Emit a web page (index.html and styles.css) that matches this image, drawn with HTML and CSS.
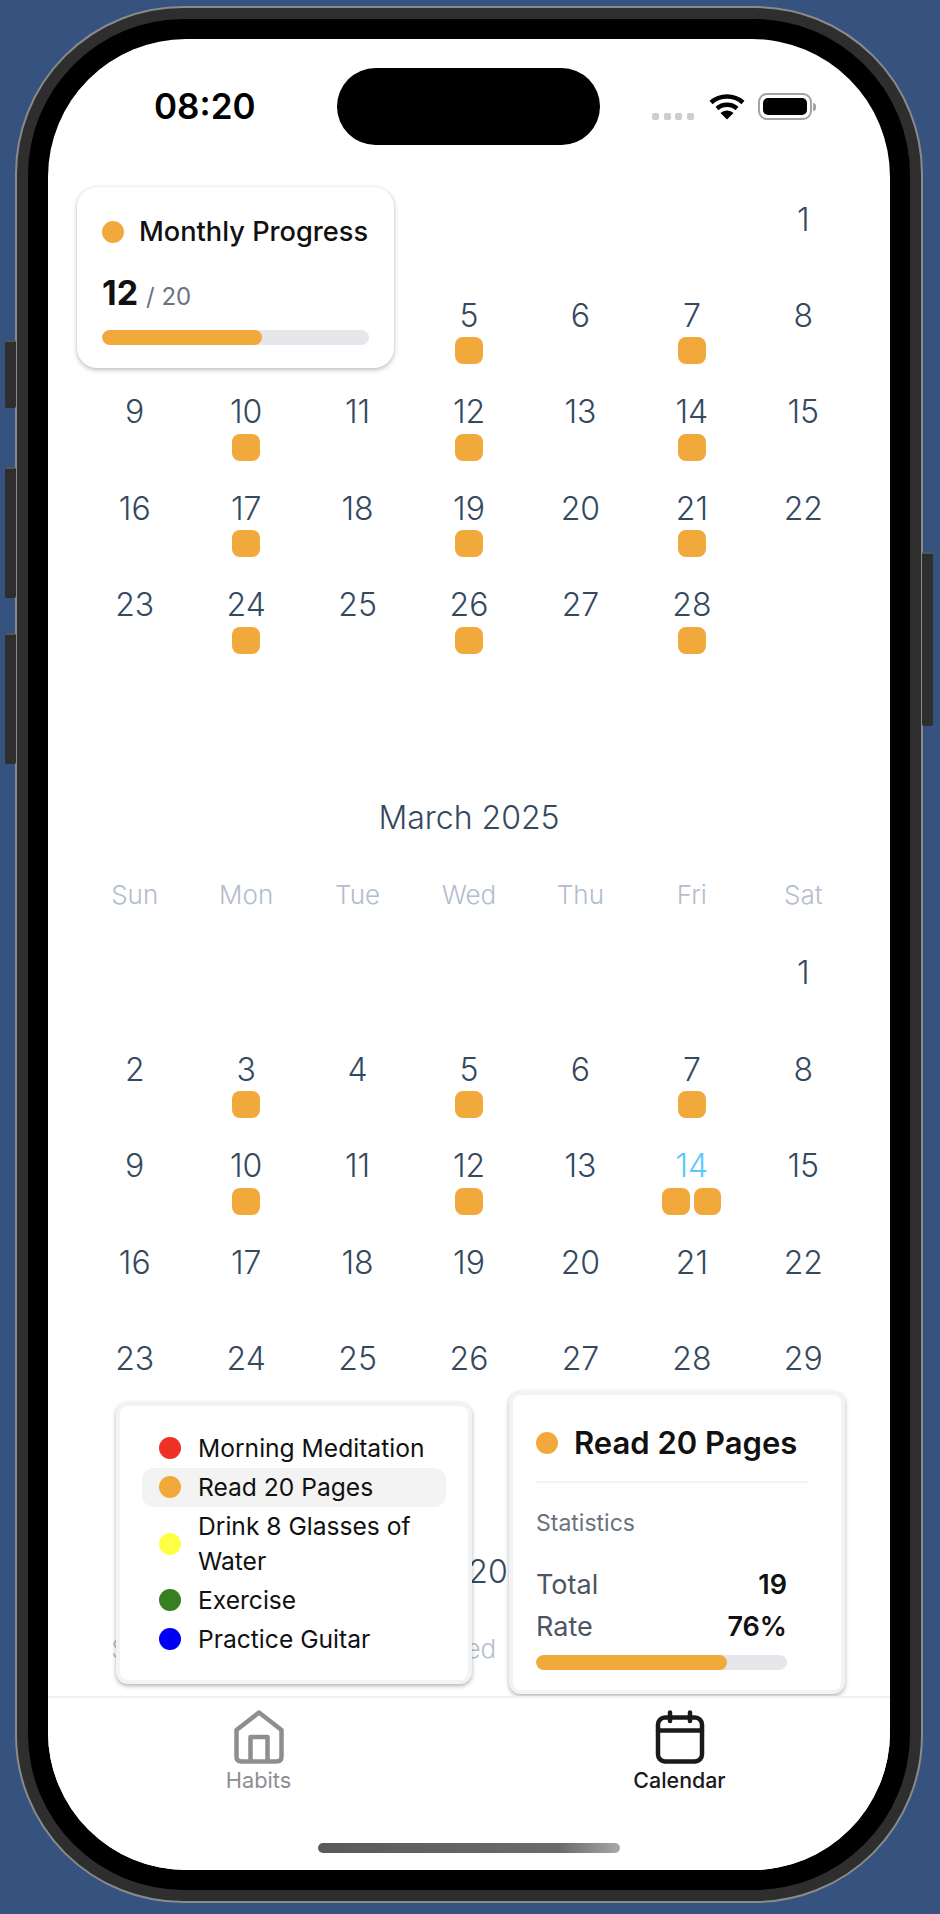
FILE: index.html
```html
<!DOCTYPE html>
<html lang="en">
<head>
<meta charset="UTF-8">
<meta name="viewport" content="width=device-width, initial-scale=1.0">
<title>Calendar</title>
<link rel="stylesheet" href="styles.css">
</head>
<body>
<div class="phone">
    <span class="side-btn side-mute"></span>
    <span class="side-btn side-up"></span>
    <span class="side-btn side-down"></span>
    <span class="side-btn side-power"></span>
    <div class="bezel">
        <div class="screen">
            <div class="status">
                <span class="time">08:20</span>
                <span class="island"></span>
                <div class="status-icons">
                    <div class="signal"><i></i><i></i><i></i><i></i></div>
                    <svg class="wifi" width="36" height="27" viewBox="0 0 36 27">
                        <path d="M2 9.5C11 1.5 25 1.5 34 9.5" fill="none" stroke="#000" stroke-width="4.5"/>
                        <path d="M8 15.5C13.5 10.5 22.5 10.5 28 15.5" fill="none" stroke="#000" stroke-width="4.5"/>
                        <path d="M18 26.5L11.5 20C15 16.6 21 16.6 24.5 20Z" fill="#000"/>
                    </svg>
                    <div class="battery"><span class="battery-level"></span></div>
                    <span class="battery-nub"></span>
                </div>
            </div>

            <div class="scroll">
                <div class="grid">
                    <div class="day empty"></div><div class="day empty"></div><div class="day empty"></div><div class="day empty"></div><div class="day empty"></div><div class="day empty"></div>
                    <div class="day"><span class="num">1</span></div>
                    <div class="day"><span class="num">2</span></div>
                    <div class="day"><span class="num">3</span><div class="marks"><i></i></div></div>
                    <div class="day"><span class="num">4</span></div>
                    <div class="day"><span class="num">5</span><div class="marks"><i></i></div></div>
                    <div class="day"><span class="num">6</span></div>
                    <div class="day"><span class="num">7</span><div class="marks"><i></i></div></div>
                    <div class="day"><span class="num">8</span></div>
                    <div class="day"><span class="num">9</span></div>
                    <div class="day"><span class="num">10</span><div class="marks"><i></i></div></div>
                    <div class="day"><span class="num">11</span></div>
                    <div class="day"><span class="num">12</span><div class="marks"><i></i></div></div>
                    <div class="day"><span class="num">13</span></div>
                    <div class="day"><span class="num">14</span><div class="marks"><i></i></div></div>
                    <div class="day"><span class="num">15</span></div>
                    <div class="day"><span class="num">16</span></div>
                    <div class="day"><span class="num">17</span><div class="marks"><i></i></div></div>
                    <div class="day"><span class="num">18</span></div>
                    <div class="day"><span class="num">19</span><div class="marks"><i></i></div></div>
                    <div class="day"><span class="num">20</span></div>
                    <div class="day"><span class="num">21</span><div class="marks"><i></i></div></div>
                    <div class="day"><span class="num">22</span></div>
                    <div class="day"><span class="num">23</span></div>
                    <div class="day"><span class="num">24</span><div class="marks"><i></i></div></div>
                    <div class="day"><span class="num">25</span></div>
                    <div class="day"><span class="num">26</span><div class="marks"><i></i></div></div>
                    <div class="day"><span class="num">27</span></div>
                    <div class="day"><span class="num">28</span><div class="marks"><i></i></div></div>
                </div>

                <div class="month">
                    <h2 class="month-title">March 2025</h2>
                    <div class="weekdays"><span>Sun</span><span>Mon</span><span>Tue</span><span>Wed</span><span>Thu</span><span>Fri</span><span>Sat</span></div>
                    <div class="grid">
                        <div class="day empty"></div><div class="day empty"></div><div class="day empty"></div><div class="day empty"></div><div class="day empty"></div><div class="day empty"></div>
                        <div class="day"><span class="num">1</span></div>
                        <div class="day"><span class="num">2</span></div>
                        <div class="day"><span class="num">3</span><div class="marks"><i></i></div></div>
                        <div class="day"><span class="num">4</span></div>
                        <div class="day"><span class="num">5</span><div class="marks"><i></i></div></div>
                        <div class="day"><span class="num">6</span></div>
                        <div class="day"><span class="num">7</span><div class="marks"><i></i></div></div>
                        <div class="day"><span class="num">8</span></div>
                        <div class="day"><span class="num">9</span></div>
                        <div class="day"><span class="num">10</span><div class="marks"><i></i></div></div>
                        <div class="day"><span class="num">11</span></div>
                        <div class="day"><span class="num">12</span><div class="marks"><i></i></div></div>
                        <div class="day"><span class="num">13</span></div>
                        <div class="day"><span class="num today">14</span><div class="marks"><i></i><i></i></div></div>
                        <div class="day"><span class="num">15</span></div>
                        <div class="day"><span class="num">16</span></div>
                        <div class="day"><span class="num">17</span></div>
                        <div class="day"><span class="num">18</span></div>
                        <div class="day"><span class="num">19</span></div>
                        <div class="day"><span class="num">20</span></div>
                        <div class="day"><span class="num">21</span></div>
                        <div class="day"><span class="num">22</span></div>
                        <div class="day"><span class="num">23</span></div>
                        <div class="day"><span class="num">24</span></div>
                        <div class="day"><span class="num">25</span></div>
                        <div class="day"><span class="num">26</span></div>
                        <div class="day"><span class="num">27</span></div>
                        <div class="day"><span class="num">28</span></div>
                        <div class="day"><span class="num">29</span></div>
                        <div class="day"><span class="num">30</span></div>
                        <div class="day"><span class="num">31</span></div>
                    </div>
                </div>

                <div class="month">
                    <h2 class="month-title">April 2025</h2>
                    <div class="weekdays"><span>Sun</span><span>Mon</span><span>Tue</span><span>Wed</span><span>Thu</span><span>Fri</span><span>Sat</span></div>
                </div>
            </div>

            <div class="progress-card">
                <div class="progress-head"><i class="dot orange"></i><span>Monthly Progress</span></div>
                <div class="progress-count"><strong>12</strong><span>/ 20</span></div>
                <div class="bar"><div class="bar-fill" style="width: 60%"></div></div>
            </div>

            <div class="legend">
                <div class="legend-row"><i class="dot red"></i><span>Morning Meditation</span></div>
                <div class="legend-row active"><i class="dot orange"></i><span>Read 20 Pages</span></div>
                <div class="legend-row"><i class="dot yellow"></i><span>Drink 8 Glasses of Water</span></div>
                <div class="legend-row"><i class="dot green"></i><span>Exercise</span></div>
                <div class="legend-row"><i class="dot blue"></i><span>Practice Guitar</span></div>
            </div>

            <div class="stats">
                <div class="stats-head"><i class="dot orange"></i><span>Read 20 Pages</span></div>
                <div class="stats-label">Statistics</div>
                <div class="stats-row"><span>Total</span><strong>19</strong></div>
                <div class="stats-row"><span>Rate</span><strong>76%</strong></div>
                <div class="bar stats-bar"><div class="bar-fill" style="width: 76%"></div></div>
            </div>

            <div class="tabs">
                <div class="tab">
                    <svg width="50" height="54" viewBox="0 0 50 54" fill="none" stroke="#8e8e8e" stroke-width="4.5" stroke-linejoin="round">
                        <path d="M25 2.5L47.5 20V46.5Q47.5 51.5 42.5 51.5H7.5Q2.5 51.5 2.5 46.5V20Z"/>
                        <path d="M16.5 51.5V27H33.5V51.5"/>
                    </svg>
                    <span>Habits</span>
                </div>
                <div class="tab tab-active">
                    <svg width="50" height="54" viewBox="0 0 50 54" fill="none" stroke="#1a1a1a" stroke-width="4.5" stroke-linecap="round">
                        <rect x="3" y="7.5" width="44" height="44" rx="7"/>
                        <path d="M3 20.5H47M15 2.5V11M35 2.5V11"/>
                    </svg>
                    <span>Calendar</span>
                </div>
                <span class="home-bar"></span>
            </div>
        </div>
    </div>
</div>
</body>
</html>
```

FILE: styles.css
```css
* {
    box-sizing: border-box;
}
html, body {
    margin: 0;
    height: 100%;
    overflow: hidden;
}
body {
    font-family: Inter, "Liberation Sans", sans-serif;
    background-color: #36537f;
    padding: 6px 0 0 15px;
}
i {
    display: block;
}

/* device frame */
.phone {
    position: relative;
    width: 908px;
    height: 1897px;
    padding: 11px;
    background-color: #2e2e2e;
    border: 2px solid #8a8a8a;
    border-radius: 168px;
}
.bezel {
    height: 100%;
    padding: 20px;
    background-color: #000;
    border-radius: 156px;
}
.screen {
    position: relative;
    display: flex;
    flex-direction: column;
    height: 100%;
    overflow: hidden;
    background-color: #fff;
    border-radius: 138px;
}
.side-btn {
    position: absolute;
    width: 11px;
    background-color: #2e2e2e;
    border-top: 2px solid #555;
    border-radius: 2px;
}
.side-mute {
    left: -12px;
    top: 332px;
    height: 68px;
}
.side-up {
    left: -12px;
    top: 459px;
    height: 131px;
}
.side-down {
    left: -12px;
    top: 625px;
    height: 131px;
}
.side-power {
    right: -12px;
    top: 544px;
    height: 174px;
}

/* status bar */
.status {
    display: flex;
    flex: none;
    height: 147.5px;
    padding: 29px 0 0 106px;
}
.time {
    width: 183px;
    height: 77px;
    font-size: 35px;
    font-weight: 600;
    line-height: 77px;
    color: #000;
}
.island {
    width: 263px;
    height: 77px;
    background-color: #000;
    border-radius: 39px;
}
.status-icons {
    display: flex;
    align-items: flex-end;
    height: 27px;
    margin: 25px 0 0 52px;
}
.signal {
    display: flex;
    gap: 4.5px;
    margin-right: 15px;
}
.signal i {
    width: 7px;
    height: 7px;
    background-color: #cdcdcd;
    border-radius: 2px;
}
.battery {
    width: 54px;
    height: 27px;
    margin-left: 13px;
    padding: 3px;
    border: 2px solid #a3a3a3;
    border-radius: 9px;
}
.battery-level {
    display: block;
    height: 100%;
    background-color: #000;
    border-radius: 5px;
}
.battery-nub {
    width: 3px;
    height: 8px;
    margin: 0 0 9px 1px;
    background-color: #a3a3a3;
    border-radius: 0 3px 3px 0;
}

/* calendar */
.scroll {
    flex: 1;
    min-height: 0;
    overflow: hidden;
    padding: 13px 31px 0;
}
.grid {
    display: grid;
    grid-template-columns: repeat(7, 1fr);
    grid-template-rows: repeat(6, 96.4px);
    margin-bottom: 20.6px;
}
.day {
    display: flex;
    flex-direction: column;
    align-items: center;
}
.num {
    font-size: 32px;
    font-weight: 300;
    line-height: 40px;
    color: #34495e;
}
.num.today {
    color: #5ac8fa;
}
.marks {
    display: flex;
    gap: 4px;
    margin-top: 1.5px;
}
.marks i {
    width: 27.5px;
    height: 27px;
    background-color: #f2a93b;
    border-radius: 8px;
}
.month-title {
    margin: 0 0 37px;
    font-size: 32px;
    font-weight: 300;
    line-height: 40px;
    text-align: center;
    color: #34495e;
}
.weekdays {
    display: grid;
    grid-template-columns: repeat(7, 1fr);
    margin-bottom: 38px;
    font-size: 26px;
    font-weight: 300;
    line-height: 40px;
    text-align: center;
    color: #b3bdcb;
}

/* dots and bars */
.dot {
    flex: none;
    width: 22px;
    height: 22px;
    border-radius: 50%;
}
.orange {
    background-color: #f2a93b;
}
.red {
    background-color: #ee3124;
}
.yellow {
    background-color: #ffff44;
}
.green {
    background-color: #38801f;
}
.blue {
    background-color: #0000f5;
}
.bar {
    height: 15px;
    overflow: hidden;
    background-color: #e5e7eb;
    border-radius: 8px;
}
.bar-fill {
    height: 100%;
    background-color: #f2a93b;
    border-radius: 8px;
}

/* overlays */
.progress-card {
    position: absolute;
    left: 29px;
    top: 148px;
    width: 317px;
    height: 181px;
    padding: 26.5px 25px 0;
    background-color: #fff;
    border-radius: 20px;
    box-shadow: 0 2px 5px rgba(0, 0, 0, 0.25), 0 0 2px rgba(0, 0, 0, 0.08);
}
.progress-head {
    display: flex;
    align-items: center;
    gap: 15px;
    height: 36px;
    font-size: 27.2px;
    font-weight: 500;
    color: #111;
}
.progress-count {
    display: flex;
    align-items: baseline;
    gap: 8px;
    margin-top: 23.5px;
    height: 40px;
    line-height: 40px;
}
.progress-count strong {
    font-size: 34px;
    font-weight: 700;
    color: #111;
}
.progress-count span {
    font-size: 24px;
    color: #6b7280;
}
.progress-card .bar {
    margin-top: 16.5px;
}
.legend {
    position: absolute;
    left: 68px;
    top: 1363px;
    width: 356px;
    height: 282px;
    padding: 22.5px 22px;
    background-color: #fff;
    border: 4px solid #f2f3f5;
    border-radius: 12px;
    box-shadow: 0 2px 4px rgba(0, 0, 0, 0.3);
}
.legend-row {
    display: flex;
    align-items: center;
    gap: 17px;
    padding: 2px 0 2px 17px;
    font-size: 24.6px;
    line-height: 35px;
    border-radius: 12px;
    color: #111;
}
.legend-row.active {
    background-color: #f3f3f3;
}
.stats {
    position: absolute;
    left: 461px;
    top: 1352px;
    width: 336px;
    height: 303px;
    padding: 27.6px 33px 0 23px;
    background-color: #fff;
    border: 4px solid #f2f3f5;
    border-radius: 12px;
    box-shadow: 0 2px 4px rgba(0, 0, 0, 0.3);
}
.stats-head {
    display: flex;
    align-items: center;
    gap: 16px;
    height: 40px;
    font-size: 31px;
    font-weight: 600;
    color: #111;
}
.stats-label {
    margin-top: 18.8px;
    padding-top: 23.2px;
    border-top: 2px solid #f3f4f6;
    font-size: 23px;
    line-height: 32px;
    color: #6b7280;
}
.stats-label + .stats-row {
    margin-top: 25px;
}
.stats-row {
    display: flex;
    justify-content: space-between;
    width: 251px;
    font-size: 27px;
    line-height: 42px;
    color: #4b5563;
}
.stats-row strong {
    font-weight: 600;
    color: #111;
}
.stats-bar {
    width: 251px;
    margin-top: 7.4px;
}

/* tab bar */
.tabs {
    position: relative;
    display: flex;
    flex: none;
    height: 174px;
    padding-top: 12px;
    background-color: #fff;
    border-top: 2px solid #f0f0f0;
}
.tab {
    display: flex;
    flex: 1;
    flex-direction: column;
    align-items: center;
    font-size: 21.8px;
    line-height: 28px;
    color: #8e8e8e;
}
.tab svg {
    display: block;
    margin-bottom: 2px;
}
.tab-active {
    font-size: 21.4px;
    font-weight: 500;
    color: #1a1a1a;
}
.home-bar {
    position: absolute;
    left: 270px;
    bottom: 17px;
    width: 302px;
    height: 10px;
    background: linear-gradient(90deg, #5a5a5a, #6b6b6b 80%, #a8a8a8);
    border-radius: 5px;
}
```
